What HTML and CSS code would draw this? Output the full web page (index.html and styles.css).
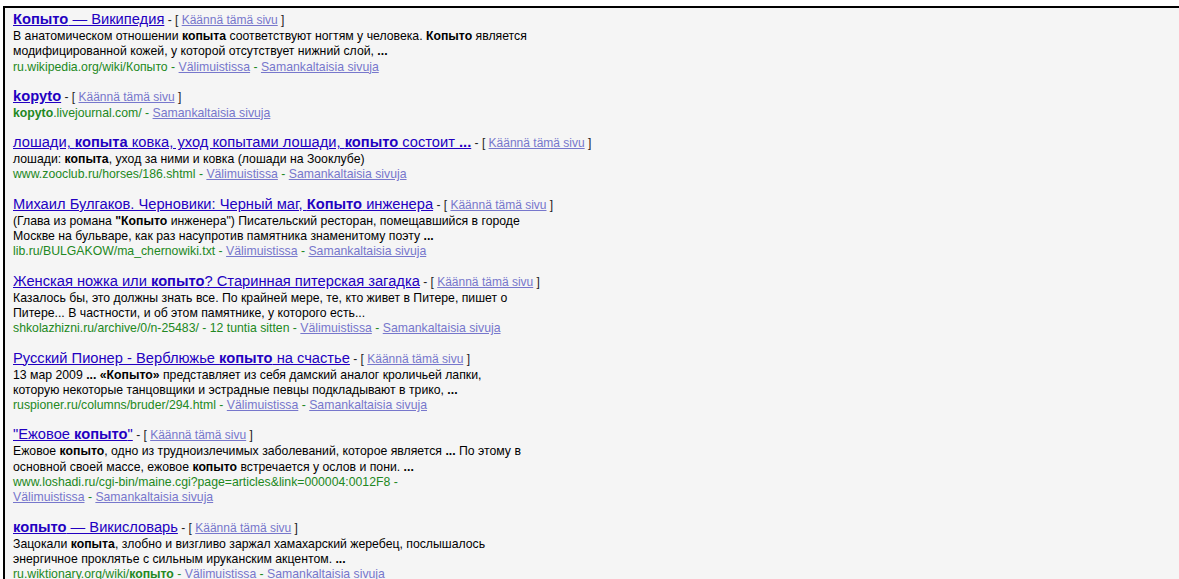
FILE: index.html
```html
<!DOCTYPE html>
<html lang="ru">
<head>
<meta charset="utf-8">
<title>копыто - Haku</title>
<link rel="stylesheet" href="styles.css">
</head>
<body>
<div class="frame">
  <ol class="results">
    <li class="g">
      <h3 class="r"><a class="l" href="#"><b>Копыто</b> — Википедия</a><span class="tl"> - [ <a class="fl" href="#">Käännä tämä sivu</a> ]</span></h3>
      <div class="s">В анатомическом отношении <b>копыта</b> соответствуют ногтям у человека. <b>Копыто</b> является<br>модифицированной кожей, у которой отсутствует нижний слой, <b>...</b><br><span class="gl"><cite>ru.wikipedia.org/wiki/Копыто</cite> - <a class="fl" href="#">Välimuistissa</a> - <a class="fl" href="#">Samankaltaisia sivuja</a></span></div>
    </li>
    <li class="g">
      <h3 class="r"><a class="l" href="#"><b>kopyto</b></a><span class="tl"> - [ <a class="fl" href="#">Käännä tämä sivu</a> ]</span></h3>
      <div class="s"><span class="gl"><cite><b>kopyto</b>.livejournal.com/</cite> - <a class="fl" href="#">Samankaltaisia sivuja</a></span></div>
    </li>
    <li class="g">
      <h3 class="r"><a class="l" href="#">лошади, <b>копыта</b> ковка, уход копытами лошади, <b>копыто</b> состоит <b>...</b></a><span class="tl"> - [ <a class="fl" href="#">Käännä tämä sivu</a> ]</span></h3>
      <div class="s">лошади: <b>копыта</b>, уход за ними и ковка (лошади на Зооклубе)<br><span class="gl"><cite>www.zooclub.ru/horses/186.shtml</cite> - <a class="fl" href="#">Välimuistissa</a> - <a class="fl" href="#">Samankaltaisia sivuja</a></span></div>
    </li>
    <li class="g">
      <h3 class="r"><a class="l" href="#">Михаил Булгаков. Черновики: Черный маг, <b>Копыто</b> инженера</a><span class="tl"> - [ <a class="fl" href="#">Käännä tämä sivu</a> ]</span></h3>
      <div class="s">(Глава из романа <b>"Копыто</b> инженера") Писательский ресторан, помещавшийся в городе<br>Москве на бульваре, как раз насупротив памятника знаменитому поэту <b>...</b><br><span class="gl"><cite>lib.ru/BULGAKOW/ma_chernowiki.txt</cite> - <a class="fl" href="#">Välimuistissa</a> - <a class="fl" href="#">Samankaltaisia sivuja</a></span></div>
    </li>
    <li class="g">
      <h3 class="r"><a class="l" href="#">Женская ножка или <b>копыто</b>? Старинная питерская загадка</a><span class="tl"> - [ <a class="fl" href="#">Käännä tämä sivu</a> ]</span></h3>
      <div class="s">Казалось бы, это должны знать все. По крайней мере, те, кто живет в Питере, пишет о<br>Питере... В частности, и об этом памятнике, у которого есть...<br><span class="gl"><cite>shkolazhizni.ru/archive/0/n-25483/</cite> - 12 tuntia sitten - <a class="fl" href="#">Välimuistissa</a> - <a class="fl" href="#">Samankaltaisia sivuja</a></span></div>
    </li>
    <li class="g">
      <h3 class="r"><a class="l" href="#">Русский Пионер - Верблюжье <b>копыто</b> на счастье</a><span class="tl"> - [ <a class="fl" href="#">Käännä tämä sivu</a> ]</span></h3>
      <div class="s">13 мар 2009 <b>...</b> <b>«Копыто»</b> представляет из себя дамский аналог кроличьей лапки,<br>которую некоторые танцовщики и эстрадные певцы подкладывают в трико, <b>...</b><br><span class="gl"><cite>ruspioner.ru/columns/bruder/294.html</cite> - <a class="fl" href="#">Välimuistissa</a> - <a class="fl" href="#">Samankaltaisia sivuja</a></span></div>
    </li>
    <li class="g">
      <h3 class="r"><a class="l" href="#">"Ежовое <b>копыто</b>"</a><span class="tl"> - [ <a class="fl" href="#">Käännä tämä sivu</a> ]</span></h3>
      <div class="s">Ежовое <b>копыто</b>, одно из трудноизлечимых заболеваний, которое является <b>...</b> По этому в<br>основной своей массе, ежовое <b>копыто</b> встречается у ослов и пони. <b>...</b><br><span class="gl"><cite>www.loshadi.ru/cgi-bin/maine.cgi?page=articles&amp;link=000004:0012F8</cite> -<br><a class="fl" href="#">Välimuistissa</a> - <a class="fl" href="#">Samankaltaisia sivuja</a></span></div>
    </li>
    <li class="g">
      <h3 class="r"><a class="l" href="#"><b>копыто</b> — Викисловарь</a><span class="tl"> - [ <a class="fl" href="#">Käännä tämä sivu</a> ]</span></h3>
      <div class="s">Зацокали <b>копыта</b>, злобно и визгливо заржал хамахарский жеребец, послышалось<br>энергичное проклятье с сильным ируканским акцентом. <b>...</b><br><span class="gl"><cite>ru.wiktionary.org/wiki/<b>копыто</b></cite> - <a class="fl" href="#">Välimuistissa</a> - <a class="fl" href="#">Samankaltaisia sivuja</a></span></div>
    </li>
  </ol>
</div>
</body>
</html>
```

FILE: styles.css
```css
html, body {
  margin: 0;
  padding: 0;
  background: #ffffff;
  height: 100%;
  overflow: hidden;
}

body {
  font-family: Arial, "Liberation Sans", sans-serif;
  color: #000;
}

/* grey canvas with the dark edge along its top and left side */
.frame {
  margin: 6px 0 0 3px;
  border-top: 2px solid #000;
  border-left: 2px solid #000;
  background: #f5f5f5;
  min-height: 100%;
  padding: 3px 0 0 8px;
  box-sizing: border-box;
}

.results {
  list-style: none;
  margin: 0;
  padding: 0;
}

.g {
  margin: 0 0 13px;
}

.r {
  margin: 0;
  font-size: 14.7px;
  font-weight: normal;
  line-height: 17px;
  white-space: nowrap;
}

.r .l {
  color: #2200c1;
  text-decoration: underline;
}

.r .l b {
  font-weight: bold;
}

.tl {
  font-size: 12px;
  color: #222;
}

.s {
  font-size: 12.25px;
  line-height: 15.3px;
  white-space: nowrap;
}

.s b {
  font-weight: bold;
}

.gl {
  color: #228822;
}

cite {
  font-style: normal;
  color: #228822;
}

a.fl {
  color: #7777cc;
  text-decoration: underline;
}
```
